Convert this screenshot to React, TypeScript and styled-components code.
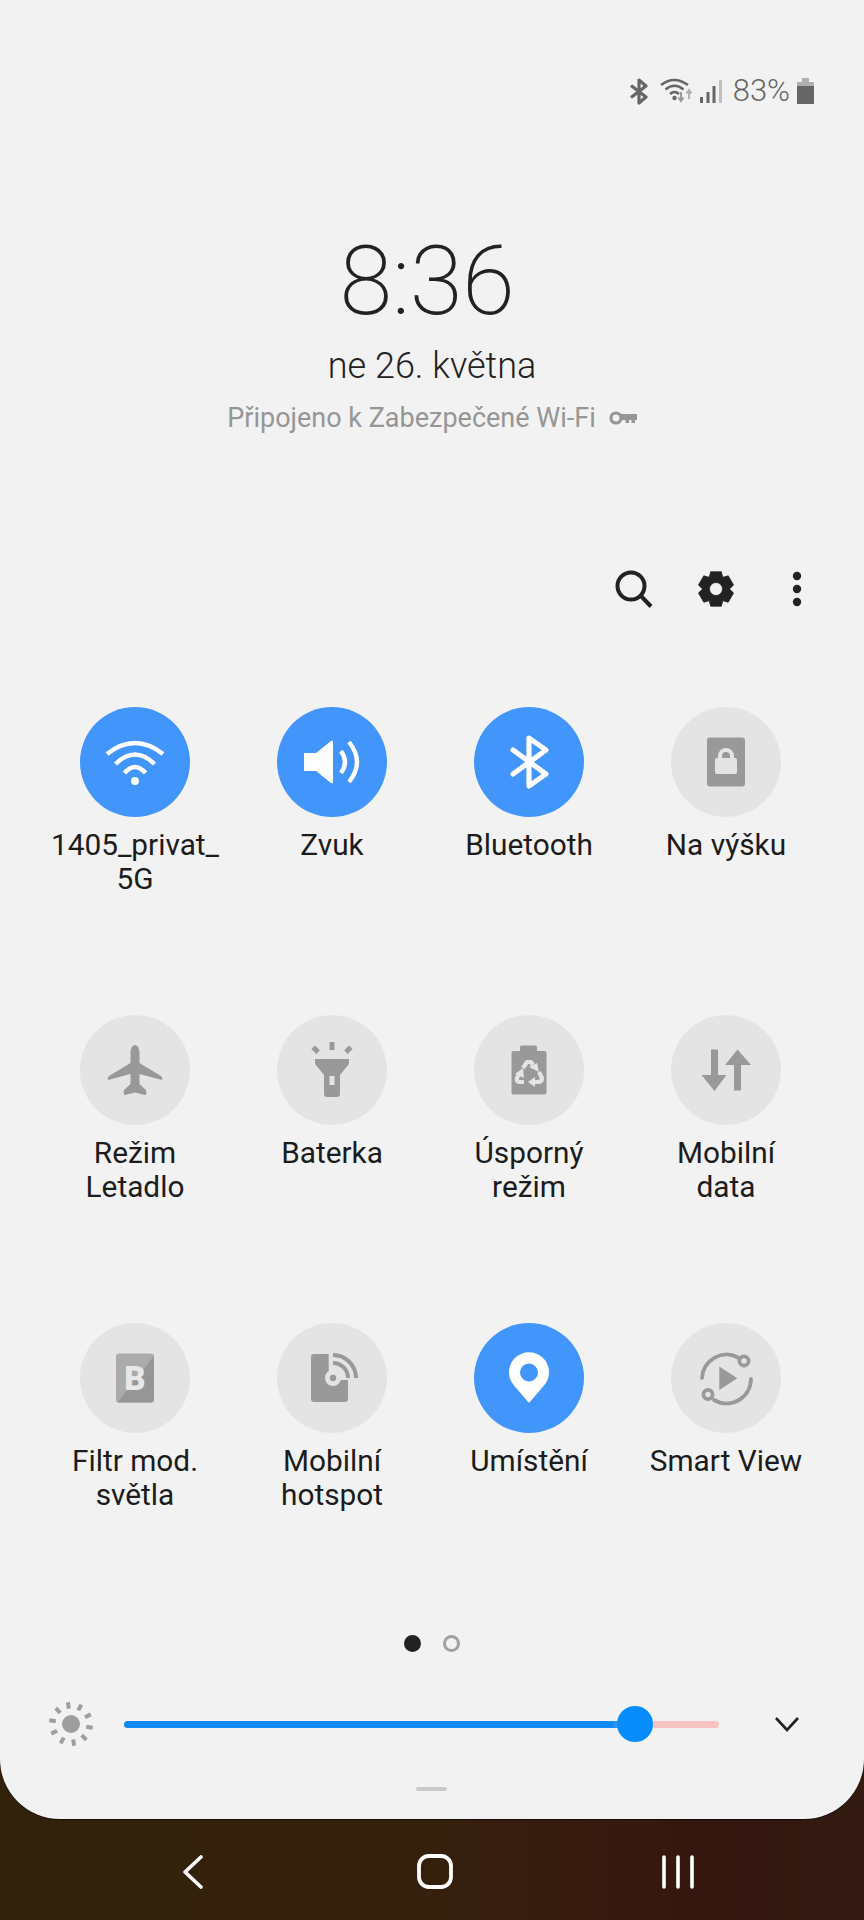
import React from "react";
import styled, { createGlobalStyle } from "styled-components";

const Global = createGlobalStyle`
  html, body { margin: 0; padding: 0; background: #33220c; }
  * { box-sizing: border-box; }
`;

const Screen = styled.div`
  width: 864px;
  height: 1920px;
  display: flex;
  flex-direction: column;
  overflow: hidden;
  font-family: Roboto, "Noto Sans", sans-serif;
  background: linear-gradient(90deg, #33220b 0%, #34210c 45%, #381c0f 66%, #35160f 82%, #331b12 100%);
`;

const Panel = styled.main`
  height: 1819px;
  flex: none;
  display: flex;
  flex-direction: column;
  padding-top: 78px;
  background: #f2f2f2;
  border-radius: 0 0 60px 60px;
  box-shadow: 0 1px 1px rgba(0, 0, 0, 0.6);
`;

const StatusBar = styled.div`
  height: 26px;
  display: flex;
  align-items: center;
  justify-content: flex-end;
  padding-right: 50px;
  color: #666;
`;

const StatusIcon = styled.svg<{ $gap?: number }>`
  display: block;
  flex: none;
  margin-left: ${(p) => p.$gap ?? 0}px;
`;

const Percent = styled.span`
  font-size: 31px;
  font-weight: 300;
  line-height: 26px;
  margin: 0 7px 0 11px;
  color: #666;
`;

const ClockBlock = styled.section`
  margin-top: 127px;
  display: flex;
  flex-direction: column;
  align-items: center;
`;

const Clock = styled.div`
  font-size: 96px;
  font-weight: 200;
  line-height: 100px;
  color: #222;
  letter-spacing: -0.5px;
  padding-right: 10px;
`;

const DateLine = styled.div`
  margin-top: 13px;
  font-size: 36px;
  font-weight: 300;
  line-height: 44px;
  color: #222;
`;

const Network = styled.div`
  margin-top: 12px;
  display: flex;
  align-items: center;
  gap: 13px;
  font-size: 27px;
  line-height: 36px;
  color: #969696;
`;

const Toolbar = styled.div`
  margin-top: 131px;
  height: 44px;
  display: flex;
  align-items: center;
  justify-content: flex-end;
  gap: 44px;
  padding-right: 49px;
`;

const TileGrid = styled.section`
  margin-top: 96px;
  display: grid;
  grid-template-columns: repeat(4, 197px);
  grid-auto-rows: 308px;
  padding-left: 36.5px;
`;

const Tile = styled.div`
  display: flex;
  flex-direction: column;
  align-items: center;
`;

const Bubble = styled.div<{ $on?: boolean }>`
  width: 110px;
  height: 110px;
  flex: none;
  border-radius: 50%;
  display: flex;
  align-items: center;
  justify-content: center;
  background: ${(p) => (p.$on ? "#4195fb" : "#e4e4e4")};
  color: ${(p) => (p.$on ? "#ffffff" : "#999999")};
`;

const Label = styled.div`
  margin-top: 11px;
  font-size: 29.8px;
  font-weight: 380;
  line-height: 34px;
  text-align: center;
  white-space: pre-line;
  color: #1c1c1c;
`;

const Pager = styled.div`
  margin-top: 4px;
  height: 17px;
  display: flex;
  justify-content: center;
  gap: 22px;
  padding-right: 1px;
`;

const PagerDot = styled.span<{ $on?: boolean }>`
  width: 17px;
  height: 17px;
  border-radius: 50%;
  background: ${(p) => (p.$on ? "#222" : "transparent")};
  border: ${(p) => (p.$on ? "none" : "3px solid #a0a0a0")};
`;

const Brightness = styled.div`
  margin-top: 54px;
  height: 36px;
  display: flex;
  align-items: center;
  padding-left: 46px;
`;

const SunIcon = styled.svg`
  flex: none;
  display: block;
`;

const Track = styled.div`
  position: relative;
  margin-left: 28px;
  width: 595px;
  height: 7px;
  border-radius: 3.5px;
  background: #f7c3c3;
`;

const TrackFill = styled.div`
  position: absolute;
  inset: 0 auto 0 0;
  border-radius: 3.5px;
  background: linear-gradient(90deg, #1089f6 0%, #1089f6 92%, #b9d8f3 97%, #f7c3c3 100%);
`;

const Thumb = styled.div`
  position: absolute;
  top: 50%;
  width: 36px;
  height: 36px;
  border-radius: 50%;
  transform: translate(-50%, -50%);
  background: #078cfc;
`;

const Chevron = styled.svg`
  margin-left: 55px;
  display: block;
`;

const Handle = styled.div`
  align-self: center;
  margin-top: 45px;
  width: 31px;
  height: 4px;
  border-radius: 2px;
  background: #c9c9c9;
  margin-left: -1px;
`;

const NavBar = styled.nav`
  flex: 1;
  display: flex;
  align-items: center;
  gap: 203px;
  padding: 5px 0 0 172px;
`;

type G = { children: React.ReactNode };
const Glyph = ({ children }: G) => (
  <svg width="64" height="64" viewBox="-32 -32 64 64" fill="none" aria-hidden="true">
    {children}
  </svg>
);

const gearPath = (() => {
  const pts: string[] = [];
  for (let i = 0; i < 6; i++) {
    const a = (i * Math.PI) / 3 - Math.PI / 2;
    const s = 0.3;
    const p = (r: number, t: number) =>
      `${(r * Math.cos(a + t)).toFixed(2)} ${(r * Math.sin(a + t)).toFixed(2)}`;
    pts.push(`${i === 0 ? "M" : "L"}${p(13.5, -0.52)}`, `L${p(18, -s)}`, `L${p(18, s)}`, `L${p(13.5, 0.52)}`);
  }
  return pts.join(" ") + " Z M0 -6.5 A6.5 6.5 0 1 0 0 6.5 A6.5 6.5 0 1 0 0 -6.5 Z";
})();

const WifiIcon = () => (
  <Glyph>
    <g stroke="currentColor" strokeWidth="4.4" strokeLinecap="butt">
      <path d="M-28 -8 Q0 -30 28 -8" />
      <path d="M-19.5 2 Q0 -17 19.5 2" />
      <path d="M-10.5 11 Q0 -1 10.5 11" />
    </g>
    <circle cx="0" cy="19" r="4" fill="currentColor" />
  </Glyph>
);

const SoundIcon = () => (
  <Glyph>
    <path d="M-28 -9 H-16 L-1 -21 Q1 -22 1 -20 V20 Q1 22 -1 21 L-16 9 H-28 Z" fill="currentColor" />
    <path d="M9 -11 Q17 0 9 11" stroke="currentColor" strokeWidth="4.4" />
    <path d="M17 -20 Q33 0 17 20" stroke="currentColor" strokeWidth="4.4" />
  </Glyph>
);

const BluetoothIcon = () => (
  <Glyph>
    <path
      d="M-16 -12 L17 12 L0 24 V-24 L17 -12 L-16 12"
      stroke="currentColor"
      strokeWidth="5.2"
      strokeLinejoin="round"
      strokeLinecap="round"
    />
  </Glyph>
);

const RotationIcon = () => (
  <Glyph>
    <rect x="-19" y="-24.5" width="38" height="49" rx="3" fill="currentColor" />
    <path d="M-6 -4 V-6 A6 6 0 0 1 6 -6 V-4" stroke="#e4e4e4" strokeWidth="4" />
    <rect x="-11" y="-4" width="22" height="16" rx="2" fill="#e4e4e4" />
  </Glyph>
);

const PlaneIcon = () => (
  <Glyph>
    <path
      d="M0 -25 C3 -25 4.5 -21 4.5 -17 V-7 L26 6 Q28 8 27 10 L4.5 4 V14 L11 20 Q12 25 10 25 L0 22.5 L-10 25 Q-12 25 -11 20 L-4.5 14 V4 L-27 10 Q-28 8 -26 6 L-4.5 -7 V-17 C-4.5 -21 -3 -25 0 -25 Z"
      fill="currentColor"
    />
  </Glyph>
);

const TorchIcon = () => (
  <Glyph>
    <rect x="-2.5" y="-28" width="5" height="8" fill="currentColor" />
    <rect x="-2.5" y="-4" width="5" height="7" transform="translate(-16 -20) rotate(-45)" fill="currentColor" />
    <rect x="-2.5" y="-4" width="5" height="7" transform="translate(16 -20) rotate(45)" fill="currentColor" />
    <path
      fillRule="evenodd"
      d="M-17 -11 H17 V-6 L8 5 V24 Q8 27 5 27 H-5 Q-8 27 -8 24 V5 L-17 -6 Z M-2.5 6 V15 H2.5 V6 Z"
      fill="currentColor"
    />
  </Glyph>
);

const SaverIcon = () => (
  <Glyph>
    <path
      d="M-7.5 -24.5 H6.5 Q8 -24.5 8 -23 V-19 H15.5 Q17.5 -19 17.5 -17 V22.5 Q17.5 24.5 15.5 24.5 H-15.5 Q-17.5 24.5 -17.5 22.5 V-17 Q-17.5 -19 -15.5 -19 H-9 V-23 Q-9 -24.5 -7.5 -24.5 Z"
      fill="currentColor"
    />
    <g stroke="#e4e4e4" strokeWidth="4.2" strokeLinejoin="round">
      <path d="M-6 -2 L-2 -8 H2 L4 -5" />
      <path d="M10 2 L13 8 Q13 12 9 12 H5" />
      <path d="M-5 12 H-9 Q-13 12 -12 8 L-10 4" />
    </g>
    <path d="M0 -3 L8 -7 L10 2 Z M6 7 V17 L-1 12 Z M-14 4 L-5 8 L-6 -2 Z" fill="#e4e4e4" />
  </Glyph>
);

const DataIcon = () => (
  <Glyph>
    <path d="M-15 -20.5 H-8 V5 H0.5 L-11.5 21 L-24.5 5 H-15 Z" fill="currentColor" />
    <path d="M11.5 -20.5 L25 -5 H15 V20.5 H8 V-5 H-1 Z" fill="currentColor" />
  </Glyph>
);

const FilterIcon = () => (
  <Glyph>
    <rect x="-19" y="-24.5" width="38" height="49" rx="3" fill="#ababab" />
    <path d="M19 -22 V21.5 Q19 24.5 16 24.5 H-17.5 Z" fill="#969696" />
    <text x="0" y="12" textAnchor="middle" fontFamily="Roboto, sans-serif" fontWeight="900" fontSize="33" fill="#e8e8e8">
      B
    </text>
  </Glyph>
);

const HotspotIcon = () => (
  <Glyph>
    <rect x="-21" y="-24" width="37" height="48" rx="3" fill="currentColor" />
    <path d="M-3.3 -26 H30 V2 H1 L-3.3 -6 Z" fill="#e4e4e4" />
    <circle cx="1" cy="0" r="8" fill="#e4e4e4" />
    <circle cx="1" cy="0" r="3.2" fill="currentColor" />
    <g stroke="currentColor" strokeWidth="4">
      <path d="M1 -15 A15 15 0 0 1 16 0" />
      <path d="M1 -23 A23 23 0 0 1 24 0" />
    </g>
  </Glyph>
);

const PinIcon = () => (
  <Glyph>
    <path
      fillRule="evenodd"
      d="M0 25 L-15 7.5 A20 20 0 1 1 15 7.5 Z M0 -14.5 A9 9 0 1 0 0 3.5 A9 9 0 1 0 0 -14.5 Z"
      fill="currentColor"
    />
  </Glyph>
);

const SmartViewIcon = () => (
  <Glyph>
    <path d="M-6.7 -11.5 L11.3 0.3 L-6.7 12 Z" fill="currentColor" />
    <g stroke="currentColor" strokeWidth="3.8">
      <path d="M-24 0 A24.5 24.5 0 0 1 12 -20.5" strokeLinecap="round" />
      <path d="M25 1 A24.5 24.5 0 0 1 -12 22" strokeLinecap="round" />
      <circle cx="18" cy="-17" r="4.6" />
      <circle cx="-18" cy="16.5" r="4.6" />
    </g>
  </Glyph>
);

const tiles = [
  { label: "1405_privat_\n5G", on: true, icon: <WifiIcon /> },
  { label: "Zvuk", on: true, icon: <SoundIcon /> },
  { label: "Bluetooth", on: true, icon: <BluetoothIcon /> },
  { label: "Na výšku", icon: <RotationIcon /> },
  { label: "Režim\nLetadlo", icon: <PlaneIcon /> },
  { label: "Baterka", icon: <TorchIcon /> },
  { label: "Úsporný\nrežim", icon: <SaverIcon /> },
  { label: "Mobilní\ndata", icon: <DataIcon /> },
  { label: "Filtr mod.\nsvětla", icon: <FilterIcon /> },
  { label: "Mobilní\nhotspot", icon: <HotspotIcon /> },
  { label: "Umístění", on: true, icon: <PinIcon /> },
  { label: "Smart View", icon: <SmartViewIcon /> },
];

const sunRays = [0, 1, 2, 3, 4, 5, 6, 7, 8, 9];
const level = ((635 - 124) / 595) * 100;

export default function App() {
  return (
    <Screen>
      <Global />
      <Panel>
        <StatusBar>
          <StatusIcon width="20" height="27" viewBox="0 0 20 27" fill="none">
            <path d="M2 7.5 L17 19 L10 25 V2 L17 8 L2 19.5" stroke="#666" strokeWidth="3.2" strokeLinejoin="round" />
          </StatusIcon>
          <StatusIcon $gap={11} width="33" height="27" viewBox="0 0 33 27" fill="none">
            <g stroke="#666" strokeWidth="2.5">
              <path d="M1 7 Q14 -3 28 7" />
              <path d="M5.5 11.5 Q14.5 4 23.5 11.5" />
              <path d="M10 16 Q14.5 12 19 16" />
            </g>
            <circle cx="14.5" cy="20" r="2.2" fill="#666" />
            <path d="M21 14 V21 M18.5 19.5 L21 23 L23.5 19.5" stroke="#9a9a9a" strokeWidth="2" />
            <path d="M29 21 V13 M26.5 15.5 L29 12 L31.5 15.5" stroke="#b0b0b0" strokeWidth="2" />
          </StatusIcon>
          <StatusIcon $gap={7} width="22" height="25" viewBox="0 0 22 25" fill="none">
            <rect x="0" y="18" width="3" height="6" fill="#666" />
            <rect x="6.5" y="13" width="3" height="11" fill="#666" />
            <rect x="12.5" y="7" width="3" height="17" fill="#666" />
            <rect x="19" y="1" width="3" height="23" fill="#c0c0c0" />
          </StatusIcon>
          <Percent>83%</Percent>
          <StatusIcon width="17" height="26" viewBox="0 0 17 26">
            <path d="M5 0 H12 V4 H17 V8 H0 V4 H5 Z" fill="#b0b0b0" />
            <rect x="0" y="8" width="17" height="18" fill="#666" />
          </StatusIcon>
        </StatusBar>

        <ClockBlock>
          <Clock>8:36</Clock>
          <DateLine>ne 26. května</DateLine>
          <Network>
            Připojeno k Zabezpečené Wi-Fi
            <svg width="28" height="16" viewBox="0 0 28 16" fill="none">
              <circle cx="7" cy="8" r="5" stroke="#969696" strokeWidth="3.2" />
              <path d="M11 4 H28 V10 H26 V13 H22.5 V10 H20 V13 H16.5 V10 H11 Z" fill="#969696" />
            </svg>
          </Network>
        </ClockBlock>

        <Toolbar>
          <svg width="38" height="38" viewBox="0 0 38 38" fill="none">
            <circle cx="16" cy="16" r="13.5" stroke="#222" strokeWidth="4" />
            <path d="M26 26 L36 36.5" stroke="#222" strokeWidth="4" />
          </svg>
          <svg width="38" height="38" viewBox="-19 -19 38 38">
            <path d={gearPath} fill="#222" fillRule="evenodd" stroke="#222" strokeWidth="0.8" strokeLinejoin="round" />
          </svg>
          <svg width="36" height="36" viewBox="0 0 36 36">
            <circle cx="18" cy="5" r="4.2" fill="#222" />
            <circle cx="18" cy="18" r="4.2" fill="#222" />
            <circle cx="18" cy="31" r="4.2" fill="#222" />
          </svg>
        </Toolbar>

        <TileGrid>
          {tiles.map((t) => (
            <Tile key={t.label}>
              <Bubble $on={t.on}>{t.icon}</Bubble>
              <Label>{t.label}</Label>
            </Tile>
          ))}
        </TileGrid>

        <Pager>
          <PagerDot $on />
          <PagerDot />
        </Pager>

        <Brightness>
          <SunIcon width="50" height="46" viewBox="-25 -23 50 46">
            <ellipse cx="0" cy="0" rx="9" ry="9" fill="#9e9e9e" />
            {sunRays.map((r) => (
              <rect key={r} x="-2" y="-22" width="4" height="6.5" fill="#9e9e9e" transform={`rotate(${r * 36 - 8})`} />
            ))}
          </SunIcon>
          <Track>
            <TrackFill style={{ width: `${level + 3.2}%` }} />
            <Thumb style={{ left: `${level}%` }} />
          </Track>
          <Chevron width="26" height="16" viewBox="0 0 26 16" fill="none">
            <path d="M2 2 L13 14 L24 2" stroke="#222" strokeWidth="2.6" />
          </Chevron>
        </Brightness>

        <Handle />
      </Panel>

      <NavBar>
        <svg width="40" height="34" viewBox="0 0 40 34" fill="none">
          <path d="M29 2 L13 17 L29 32" stroke="#fff" strokeWidth="3.6" strokeLinecap="round" strokeLinejoin="round" />
        </svg>
        <svg width="40" height="36" viewBox="0 0 40 36" fill="none">
          <rect x="4" y="2" width="32" height="31" rx="10" stroke="#fff" strokeWidth="3.8" />
        </svg>
        <svg width="40" height="34" viewBox="0 0 40 34" fill="none">
          <path d="M6 2 V32 M20 2 V32 M34 2 V32" stroke="#fff" strokeWidth="3.6" strokeLinecap="round" />
        </svg>
      </NavBar>
    </Screen>
  );
}
